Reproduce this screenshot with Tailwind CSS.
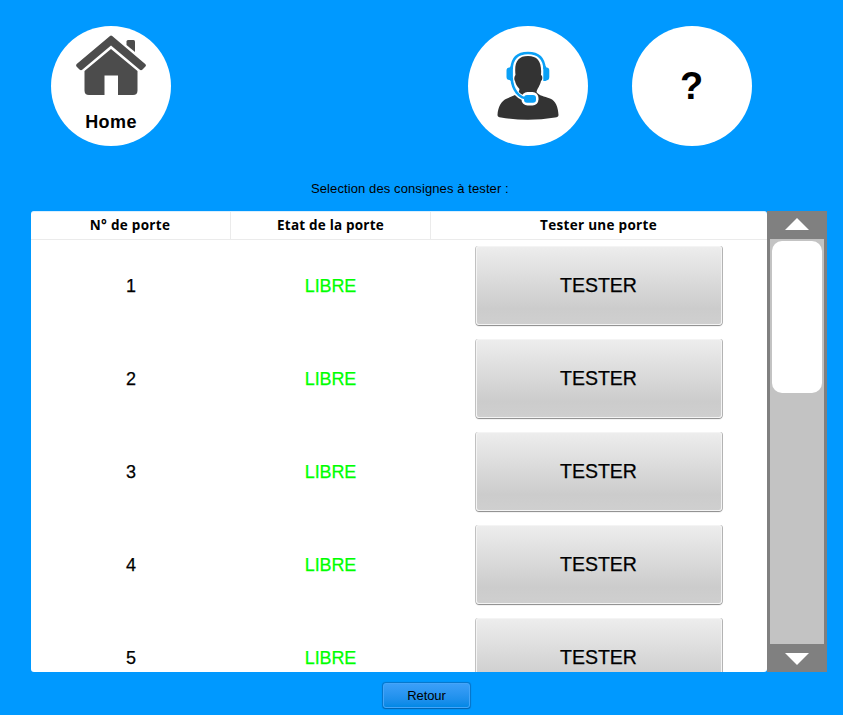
<!DOCTYPE html>
<html lang="fr">
<head>
<meta charset="utf-8">
<title>Consignes</title>
<script src="https://cdn.jsdelivr.net/npm/@tailwindcss/browser@4"></script>
</head>
<body class="w-[843px] h-[715px] overflow-hidden bg-[#0099ff] text-black font-['Liberation_Sans',Arial,sans-serif]">
<header class="flex pt-[26px] pl-[51px]">
  <button class="size-[120px] rounded-full bg-white flex flex-col items-center">
    <svg class="mt-[9px] shrink-0" width="72" height="62" viewBox="0 0 72 62" fill="#4c4c4c">
      <path d="M51.500 6.500Q51.500 5 53 5H58.500Q60 5 60 6.500V17L51.500 10Z"/>
      <path d="M35 1Q36 -.2 37.200 1L70.200 29Q71.700 30.300 70.200 31.800L67.500 34.600Q66 35.700 64.500 34.600L36 10.500L7.500 34.600Q6 35.700 4.500 34.600L1.700 31.800Q.5 30.300 1.700 29Z"/>
      <path d="M36 14L62.500 36V55.500Q62.500 60 58 60H43V40.500H29.500V60H14Q9.500 60 9.500 55.500V36Z"/>
    </svg>
    <span class="mt-[13px] text-[18px] leading-6 font-bold tracking-[0.4px]">Home</span>
  </button>
  <button class="ml-[297px] size-[120px] rounded-full bg-white flex justify-center pt-[24px]">
    <svg width="64" height="72" viewBox="0 0 64 72">
      <path fill="#333333" d="M19.500 25C18 12 22 6 32 6S46 12 45 25C47 26 46.500 30 45 31C44 36 41.500 38 40.500 42C43 46 48 46 54 48.500C60 51 62 57 62.500 65Q62.500 67 59 67.500Q32 72 5 67.500Q1.500 67 1.500 65C2 57 5 51 11 48.500L19 45Q23 43.500 23.500 39C20.500 36 19.500 33 19 31C18 30 18 27 19.500 25Z"/>
      <path fill="none" stroke="#fff" stroke-width="5" d="M15.500 32C17 41 23 48.500 32 48.500"/>
      <rect x="25.500" y="42" width="17" height="13.500" rx="6" fill="#fff"/>
      <path fill="none" stroke="#0aa0f6" stroke-width="2.600" d="M15.600 19C16 8 22 3 32 3S48 8 48.600 19M15.600 28C16.500 40 23 48.500 32 48.500"/>
      <path fill="#0aa0f6" d="M16.900 16H15L13.500 17.500Q10.500 17.500 10.500 20.500V27Q10.500 30 13.500 30L15 31H16.900ZM47.300 16H49.500L50.500 17.500Q53.300 17.500 53.300 20.500V27Q53.300 30 50.500 30.500L49.500 31H47.300Z"/>
      <rect x="28" y="45" width="12" height="7.800" rx="3" fill="#0aa0f6"/>
    </svg>
  </button>
  <button class="ml-[44px] size-[120px] rounded-full bg-white flex items-center justify-center text-[38px] leading-none font-bold pr-px">?</button>
</header>
<p class="mt-[33px] h-[32px] pl-[311px] text-[13px] leading-[19px] tracking-[0.1px] whitespace-nowrap">Selection des consignes à tester :</p>
<main class="ml-[31px] flex h-[461px] w-[796px]">
  <section class="w-[736px] rounded-[3px] overflow-hidden bg-white border-t border-[#d9efff]">
    <div class="grid grid-cols-[200px_200px_336px] h-[28px] border-b border-[#ebebeb] text-center font-['Open_Sans','Noto_Sans',sans-serif] text-[13.5px] leading-[27px] font-bold">
      <div class="border-r border-[#ebebeb] tracking-[0.3px] pr-px">N° de porte</div>
      <div class="border-r border-[#ebebeb] tracking-[0.2px]">Etat de la porte</div>
      <div class="tracking-[0.3px] pr-px">Tester une porte</div>
    </div>
    <div id="rows"></div>
  </section>
  <aside class="w-[60px] bg-[#808080] flex flex-col items-center">
    <svg class="h-[28px] w-[24px] shrink-0" viewBox="0 0 24 28"><path fill="#fff" d="M0 19L12 7L24 19Z"/></svg>
    <div class="w-[54px] grow bg-[#c3c3c3] pt-[2px] px-[2px]"><div class="h-[152px] rounded-[10px] bg-white"></div></div>
    <svg class="h-[28px] w-[24px] shrink-0" viewBox="0 0 24 28"><path fill="#fff" d="M0 9L12 21L24 9Z"/></svg>
  </aside>
</main>
<button class="mt-[11px] ml-[383px] block h-[25px] w-[87px] rounded-[3px] border border-[#45a5f8] bg-linear-to-b from-[#3b9ff8] to-[#0088e6] text-[13px] leading-[23px] shadow-[0_1px_1px_#0067b5,0_0_1px_0.5px_#0875c9]"><span class="tracking-[-0.1px]">Retour</span></button>
<script>
document.getElementById('rows').innerHTML = [1, 2, 3, 4, 5].map(n => `
  <div class="grid grid-cols-[200px_200px_336px] h-[93px] text-center text-[18px] leading-[92px] [-webkit-text-stroke:0.25px]">
    <div>${n}</div>
    <div class="text-[#00ff00] tracking-[-0.1px] pr-px">LIBRE</div>
    <div class="flex justify-center pt-[6px]"><button class="h-[79px] w-[246px] rounded-[3px] border border-[#f4f4f4] bg-linear-to-b from-[#ededed] via-[#cccccc] via-80% to-[#cfcfcf] text-[19.5px] leading-[77px] pr-px shadow-[0_1px_1px_#888,1px_0_0_#b8b8b8,-1px_0_0_#c8c8c8]">TESTER</button></div>
  </div>`).join('');
</script>
</body>
</html>
